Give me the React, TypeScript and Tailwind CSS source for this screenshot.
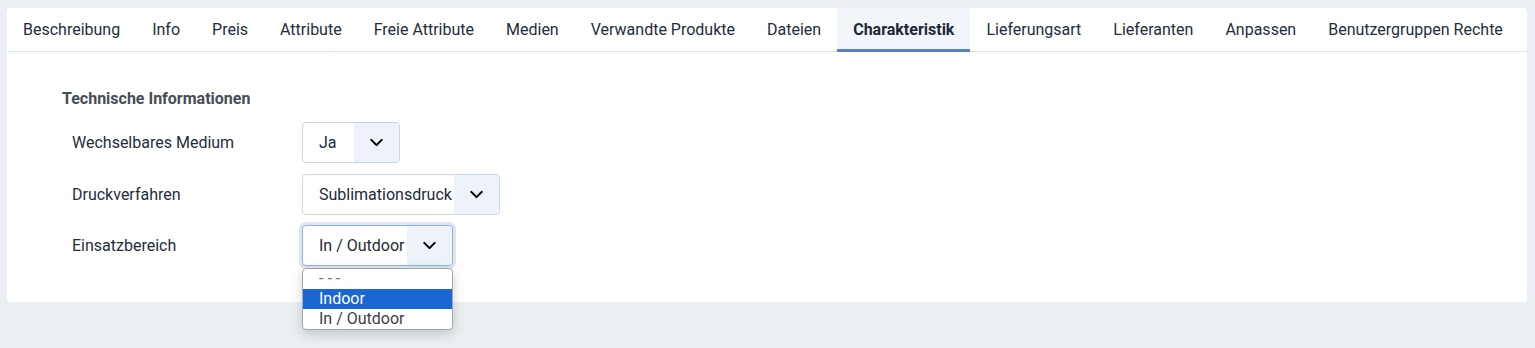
import { ChevronDown } from "lucide-react";

const tabs = [
  "Beschreibung",
  "Info",
  "Preis",
  "Attribute",
  "Freie Attribute",
  "Medien",
  "Verwandte Produkte",
  "Dateien",
  "Charakteristik",
  "Lieferungsart",
  "Lieferanten",
  "Anpassen",
  "Benutzergruppen Rechte",
];

const rows = [
  { label: "Wechselbares Medium", value: "Ja", width: "w-[98px]" },
  { label: "Druckverfahren", value: "Sublimationsdruck", width: "w-[198px]" },
];

function Select({ value, width, focused }: { value: string; width: string; focused?: boolean }) {
  return (
    <div
      className={`${width} h-[41px] flex items-stretch rounded-[4px] border bg-white overflow-hidden ${
        focused
          ? "border-[#8ab4f0] shadow-[0_0_0_3px_rgba(205,210,218,0.6)]"
          : "border-[#c9d5e8]"
      }`}
    >
      <span className="flex-1 flex items-center pl-4 text-[16px] text-[#1e2a38] whitespace-nowrap">{value}</span>
      <span className="w-[45px] shrink-0 flex items-center justify-center bg-[#eef2f9]">
        <ChevronDown size={21} strokeWidth={2.4} className="text-black" />
      </span>
    </div>
  );
}

export default function App() {
  return (
    <div className="min-h-[348px] bg-[#ebeff4] pt-2 pl-[7px] pr-2" style={{ fontFamily: "Roboto, 'Liberation Sans', sans-serif" }}>
      <div className="bg-white rounded-[4px] h-[294px]">
        <div className="flex border-b border-[#dfe4ea] h-[44px]">
          {tabs.map((tab) => (
            <div
              key={tab}
              className={`px-4 flex items-center text-[16px] ${
                tab === "Charakteristik"
                  ? "font-bold text-[#1c2838] bg-[#f2f5f9] border-b-[3px] border-[#5583c4] pt-[3px] -mb-px"
                  : "text-[#1f2d3d]"
              }`}
            >
              {tab}
            </div>
          ))}
        </div>

        <div className="pl-[55px] pt-[35px]">
          <h3 className="text-[16px] leading-[24px] font-bold text-[#474d55] mb-[11px]">Technische Informationen</h3>
          <div className="flex flex-col gap-[11px] pl-[10px]">
            {rows.map((row) => (
              <div key={row.label} className="flex items-center">
                <span className="w-[230px] text-[16px] text-[#1f2d3d]">{row.label}</span>
                <Select value={row.value} width={row.width} />
              </div>
            ))}
            <div className="flex items-center -mt-px">
              <span className="w-[230px] text-[16px] text-[#1f2d3d]">Einsatzbereich</span>
              <div className="relative">
                <Select value="In / Outdoor" width="w-[151px]" focused />
                <ul className="absolute left-0 top-[43px] w-[151px] bg-white border border-[#a3a6ab] rounded-[4px] overflow-hidden shadow-[0_4px_12px_rgba(0,0,0,0.18)] text-[16px] leading-[20px] z-10">
                  <li className="pl-4 text-[#6b7078]">- - -</li>
                  <li className="pl-4 bg-[#1a66d2] text-white">Indoor</li>
                  <li className="pl-4 text-[#3a3f45]">In / Outdoor</li>
                </ul>
              </div>
            </div>
          </div>
        </div>
      </div>
    </div>
  );
}
